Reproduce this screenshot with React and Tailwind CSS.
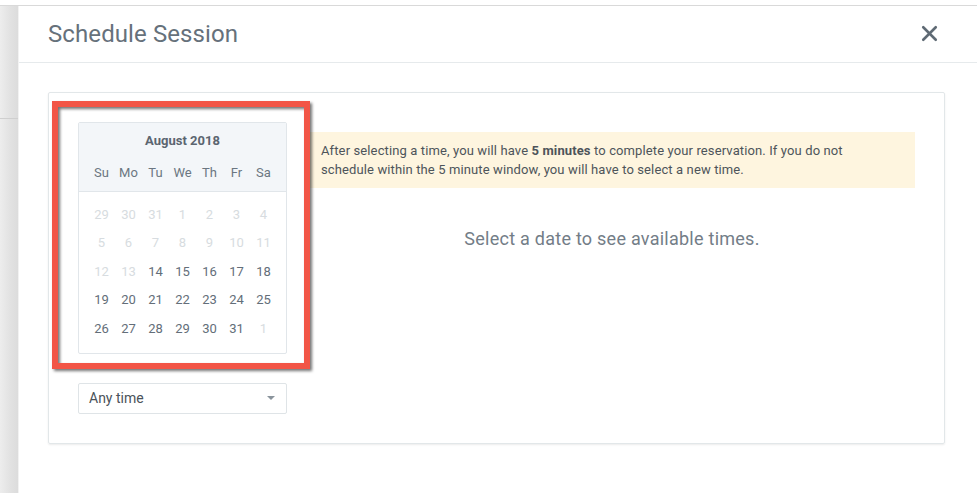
import { X } from 'lucide-react';

const weekDays = ['Su', 'Mo', 'Tu', 'We', 'Th', 'Fr', 'Sa'];

// August 2018, padded with the days of July and September
const days = [
    { n: 29, off: true }, { n: 30, off: true }, { n: 31, off: true }, { n: 1, off: true }, { n: 2, off: true }, { n: 3, off: true }, { n: 4, off: true },
    { n: 5, off: true }, { n: 6, off: true }, { n: 7, off: true }, { n: 8, off: true }, { n: 9, off: true }, { n: 10, off: true }, { n: 11, off: true },
    { n: 12, off: true }, { n: 13, off: true }, { n: 14 }, { n: 15 }, { n: 16 }, { n: 17 }, { n: 18 },
    { n: 19 }, { n: 20 }, { n: 21 }, { n: 22 }, { n: 23 }, { n: 24 }, { n: 25 },
    { n: 26 }, { n: 27 }, { n: 28 }, { n: 29 }, { n: 30 }, { n: 31 }, { n: 1, off: true },
];

function Calendar() {
    return (
        <div className="relative w-[209px] border border-[#e1e6ea] rounded-[2px] bg-white">
            {/* En-tête du mois */}
            <div className="bg-[#f3f6f9] border-b border-[#e1e6ea] px-[9px] pt-[9px] pb-[8px]">
                <div className="text-center text-[13px] font-bold text-[#5b6570] leading-[18px]">August 2018</div>
                <div className="grid grid-cols-7 mt-[13px]">
                    {weekDays.map((d) => (
                        <div key={d} className="text-center text-[13px] text-[#6b7681] leading-[20px]">{d}</div>
                    ))}
                </div>
            </div>

            {/* Jours */}
            <div className="grid grid-cols-7 px-[9px] pt-[8px] pb-[10px]">
                {days.map((d, i) => (
                    <div
                        key={i}
                        className={
                            'h-[28.5px] flex items-center justify-center text-[13px] ' +
                            (d.off ? 'text-[#d7dce0]' : 'text-[#636e79]')
                        }
                    >
                        {d.n}
                    </div>
                ))}
            </div>

            {/* Cadre rouge d'annotation */}
            <div className="absolute left-[-27px] top-[-22px] w-[258px] h-[268px] border-[6px] border-[#f25546] drop-shadow-[2px_2px_1.5px_rgba(0,0,0,0.55)] pointer-events-none" />
        </div>
    );
}

export default function App() {
    return (
        <div
            className="w-[977px] h-[493px] overflow-hidden bg-white flex flex-col"
            style={{ fontFamily: 'Roboto, "Noto Sans", sans-serif' }}
        >
            {/* Bande du haut (page derrière) */}
            <div className="h-[6px] shrink-0 bg-white border-b border-[#d9d9d9]" />

            <div className="flex flex-1 min-h-0">
                {/* Page derrière la modale */}
                <div className="w-[19px] shrink-0 bg-gradient-to-r from-[#ededed] via-[#e3e3e3] to-[#dcdcdc] border-r border-[#f2f2f2] pt-[112px]">
                    <div className="h-px bg-[#cfcfcf]" />
                </div>

                {/* Modale */}
                <div className="flex-1 flex flex-col bg-white">
                    <div className="h-[57px] shrink-0 border-b border-[#e6eaec] flex items-center justify-between pl-[29px] pr-[35px]">
                        <h1 className="text-[24px] text-[#66717b] leading-none tracking-[0.1px] pb-[1px]">Schedule Session</h1>
                        <X className="w-[25px] h-[25px] text-[#5f6a74] mb-[1px]" strokeWidth={2.5} />
                    </div>

                    <div className="pt-[29px] pl-[29px] pr-[32px]">
                        <div className="h-[352px] border border-[#e2e7e9] rounded-[2px] shadow-[0_1px_2px_rgba(0,0,0,0.08)] flex pt-[29px] pl-[29px] pr-[29px]">
                            <div className="flex flex-col w-[209px] shrink-0">
                                <Calendar />

                                <div className="mt-[29px] h-[31px] border border-[#dfe4e7] rounded-[2px] flex items-center justify-between pl-[10px] pr-[11px]">
                                    <span className="text-[14px] text-[#4a5259]">Any time</span>
                                    <span className="w-0 h-0 border-l-[4px] border-r-[4px] border-t-[4px] border-l-transparent border-r-transparent border-t-[#8a949c]" />
                                </div>
                            </div>

                            <div className="flex-1 ml-[22px] pt-[10px]">
                                <div className="bg-[#fef5df] px-[12px] py-[9px] text-[13px] leading-[19px] tracking-[0.12px] text-[#4d545a]">
                                    After selecting a time, you will have <b className="font-bold">5 minutes</b> to complete your reservation. If you do not
                                    <br />
                                    schedule within the 5 minute window, you will have to select a new time.
                                </div>
                                <p className="mt-[39px] text-center text-[18px] text-[#737d87] leading-[24px] tracking-[0.25px]">
                                    Select a date to see available times.
                                </p>
                            </div>
                        </div>
                    </div>
                </div>
            </div>
        </div>
    );
}
